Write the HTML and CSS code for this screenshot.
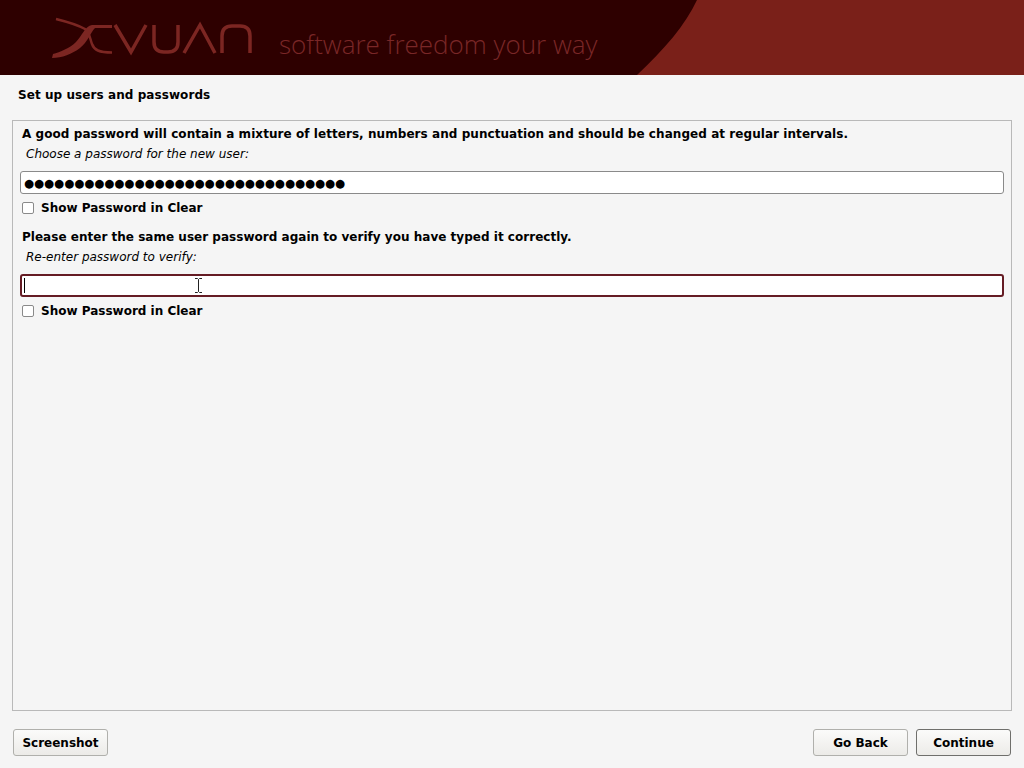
FILE: index.html
```html
<!DOCTYPE html>
<html lang="en">
<head>
    <meta charset="UTF-8">
    <title>Set up users and passwords</title>
    <link rel="stylesheet" href="styles.css">
</head>
<body>
    <div class="banner">
        <svg class="banner-curve" width="1024" height="75" viewBox="0 0 1024 75">
            <path d="M697 0 C686 24 664 50 637 75 L1024 75 L1024 0 Z" fill="#7a2019"/>
        </svg>
        <svg class="logo" width="204" height="44" viewBox="50 15 204 44">
            <path d="M56 19 C68 22 78 25 85 29 C90 33 90 39 92 44 C94 50 99 52.500 112 52.500" fill="none" stroke="#7c2622" stroke-width="2.500"/>
            <path d="M112 25 L92 25 C85 26 82 36 76 42 C70 48 60 52 53 54 L52 58 C62 58 72 54 80 48 C88 42 90 33 95 28 L112 28 Z" fill="#7c2622"/>
            <path d="M115 25 L131 52 L146 25" fill="none" stroke="#7c2622" stroke-width="3.500"/>
            <path d="M154 25 L154 42 Q154 52 164 52 L168 52 Q178 52 178 42 L178 25" fill="none" stroke="#7c2622" stroke-width="3.500"/>
            <path d="M184 53 L200 25 L215 53" fill="none" stroke="#7c2622" stroke-width="3.500"/>
            <path d="M222 53 L222 36 Q222 26 232 26 L240 26 Q250 26 250 36 L250 53" fill="none" stroke="#7c2622" stroke-width="3.500"/>
        </svg>
        <div class="tagline">software freedom your way</div>
    </div>

    <div class="page-title">Set up users and passwords</div>

    <div class="frame">
        <div class="question">A good password will contain a mixture of letters, numbers and punctuation and should be changed at regular intervals.</div>
        <div class="prompt">Choose a password for the new user:</div>
        <div class="entry">●●●●●●●●●●●●●●●●●●●●●●●●●●●●●●●●</div>
        <div class="check-row"><span class="check-box"></span>Show Password in Clear</div>

        <div class="question second">Please enter the same user password again to verify you have typed it correctly.</div>
        <div class="prompt">Re-enter password to verify:</div>
        <div class="entry focused"><span class="caret"></span></div>
        <div class="check-row"><span class="check-box"></span>Show Password in Clear</div>
    </div>

    <div class="actions">
        <button class="btn">Screenshot</button>
        <div class="actions-right">
            <button class="btn">Go Back</button>
            <button class="btn default">Continue</button>
        </div>
    </div>

    <svg class="pointer" width="9" height="15" viewBox="0 0 9 15">
        <path d="M1 .5 L3.500 .5 L4.500 1.500 L5.500 .5 L8 .5 M4.500 1.500 L4.500 13.500 M1 14.500 L3.500 14.500 L4.500 13.500 L5.500 14.500 L8 14.500" fill="none" stroke="#222" stroke-width="1"/>
    </svg>
</body>
</html>
```

FILE: styles.css
```css
html, body {
    height: 100%;
}
body {
    font-family: "DejaVu Sans", sans-serif;
    font-size: 12px;
    color: #000;
    background-color: #f5f5f5;
    margin: 0;
    height: 768px;
    overflow: hidden;
    display: flex;
    flex-direction: column;
    position: relative;
}
.banner {
    height: 75px;
    background-color: #2e0000;
    position: relative;
    display: flex;
    align-items: center;
    padding-left: 50px;
    flex-shrink: 0;
}
.banner-curve {
    position: absolute;
    left: 0;
    top: 0;
}
.logo {
    position: relative;
    margin-top: -1px;
}
.tagline {
    position: relative;
    font-family: "Open Sans", sans-serif;
    font-weight: 300;
    font-size: 26px;
    color: #7a2727;
    margin-left: 25px;
    margin-top: 13px;
    white-space: nowrap;
}
.page-title {
    font-weight: bold;
    letter-spacing: 0.07px;
    height: 45px;
    line-height: 41px;
    padding-left: 18px;
}
.frame {
    height: 591px;
    box-sizing: border-box;
    margin: 0 12px;
    padding: 5px 7px;
    border: 1px solid #b9b9b9;
    flex-shrink: 0;
}
.question {
    font-weight: bold;
    letter-spacing: 0.06px;
    line-height: 17px;
    padding-left: 2px;
}
.question.second {
    letter-spacing: 0.02px;
    margin-top: 13px;
}
.prompt {
    font-style: italic;
    line-height: 17px;
    padding-left: 6px;
    margin-top: 3px;
}
.entry {
    height: 23px;
    box-sizing: border-box;
    margin-top: 8px;
    padding-left: 3px;
    font-size: 11.500px;
    line-height: 23px;
    background-color: #fff;
    border: 1px solid #8a8a8a;
    border-radius: 3px;
    white-space: nowrap;
    overflow: hidden;
}
.entry.focused {
    border: 2px solid #651c24;
    padding-left: 2px;
    display: flex;
    align-items: center;
}
.caret {
    width: 1px;
    height: 15px;
    background-color: #000;
}
.check-row {
    display: flex;
    align-items: center;
    font-weight: bold;
    height: 17px;
    margin-top: 5px;
    padding-left: 2px;
}
.check-box {
    width: 10px;
    height: 10px;
    border: 1px solid #8a8a8a;
    border-radius: 2px;
    background-color: #fff;
    margin-right: 7px;
}
.actions {
    display: flex;
    justify-content: space-between;
    padding: 18px 13px 0 13px;
}
.actions-right {
    display: flex;
    gap: 8px;
}
.btn {
    font-family: "DejaVu Sans", sans-serif;
    font-size: 12px;
    font-weight: bold;
    color: #000;
    width: 95px;
    height: 27px;
    padding: 0;
    border: 1px solid #b0b0ac;
    border-radius: 3px;
    background: linear-gradient(#fbfbfa, #ecebe8);
}
.btn.default {
    border-color: #6f6f6c;
}
.pointer {
    position: absolute;
    left: 194px;
    top: 278px;
}
```
